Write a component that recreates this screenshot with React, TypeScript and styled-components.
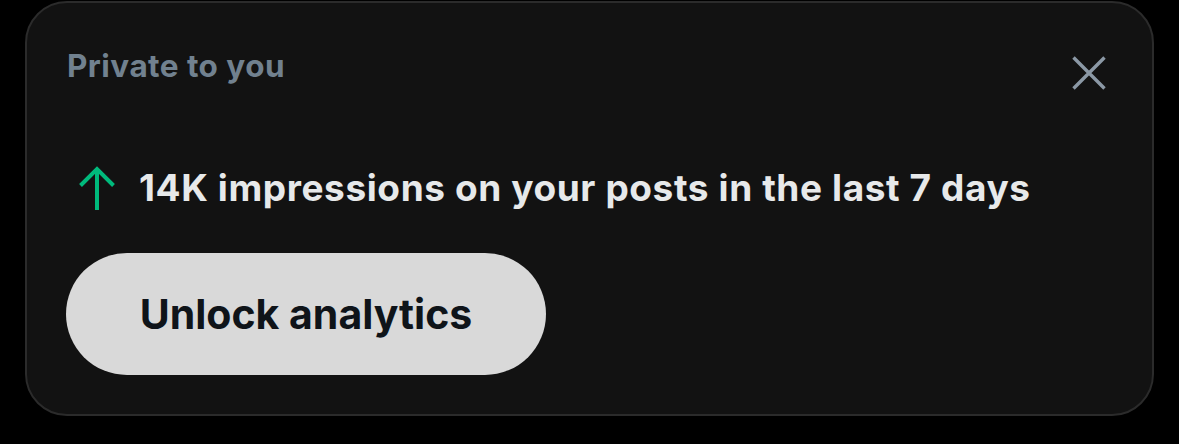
import React from "react";
import styled, { createGlobalStyle } from "styled-components";

const GlobalStyle = createGlobalStyle`
  html, body {
    margin: 0;
    background: #000;
  }
  body {
    font-family: Inter, "Liberation Sans", Arial, sans-serif;
  }
`;

const Page = styled.div`
  width: 1179px;
  height: 444px;
  padding: 1px 0 0 25px;
  box-sizing: border-box;
`;

const Card = styled.div`
  width: 1129px;
  height: 415px;
  box-sizing: border-box;
  background: #121212;
  border: 2px solid #2b2b2b;
  border-radius: 42px;
  padding: 41px 40px 0 40px;
  display: flex;
  flex-direction: column;
`;

const Header = styled.div`
  display: flex;
  align-items: flex-start;
  justify-content: space-between;
`;

const Title = styled.div`
  font-size: 31.5px;
  font-weight: 700;
  line-height: 44px;
  color: #71818f;
  letter-spacing: 0.45px;
`;

const CloseButton = styled.button`
  width: 44px;
  height: 44px;
  margin: 7px 1px 0 0;
  padding: 0;
  border: none;
  background: transparent;
  display: flex;
  align-items: center;
  justify-content: center;
  color: #8b98a5;
`;

const StatRow = styled.div`
  display: flex;
  align-items: center;
  gap: 22px;
  margin-top: 70px;
  padding-left: 10px;
`;

const StatText = styled.div`
  font-size: 37px;
  font-weight: 700;
  line-height: 44px;
  color: #e7e9ea;
  letter-spacing: 0.6px;
`;

const UnlockButton = styled.button`
  align-self: flex-start;
  margin-top: 42px;
  margin-left: -1px;
  width: 480px;
  height: 122px;
  border: none;
  border-radius: 61px;
  background: #d9d9d9;
  color: #0f1419;
  font-family: inherit;
  font-size: 41px;
  font-weight: 700;
`;

export default function App() {
  return (
    <>
      <GlobalStyle />
      <Page>
        <Card>
          <Header>
            <Title>Private to you</Title>
            <CloseButton aria-label="Close">
              <svg width="34" height="34" viewBox="0 0 34 34" fill="none">
                <path d="M1.5 1.5 L32.5 32.5 M32.5 1.5 L1.5 32.5" stroke="currentColor" strokeWidth="3.4" />
              </svg>
            </CloseButton>
          </Header>
          <StatRow>
            <svg width="40" height="46" viewBox="0 0 40 46" fill="none">
              <path d="M20 45 V4 M3.5 20.5 L20 4 L36.5 20.5" stroke="#00ba7c" strokeWidth="4" />
            </svg>
            <StatText>14K impressions on your posts in the last 7 days</StatText>
          </StatRow>
          <UnlockButton>Unlock analytics</UnlockButton>
        </Card>
      </Page>
    </>
  );
}
